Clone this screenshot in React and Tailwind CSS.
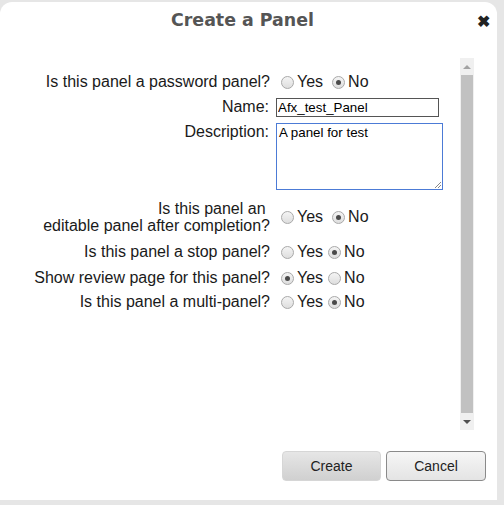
import React from 'react'

const FONT = '"Liberation Sans", Arial, sans-serif'

const Radio = ({ checked, className = '' }) => (
  <span
    className={`inline-flex w-[13px] h-[13px] shrink-0 items-center justify-center rounded-full border border-[#a9a9a9] bg-gradient-to-b from-[#f4f4f4] to-[#dedede] ${className}`}
  >
    {checked && <span className="w-[5px] h-[5px] rounded-full bg-[#4a4a4a]" />}
  </span>
)

const YesNo = ({ value, spaced }) => (
  <div className="flex items-center text-[16px] leading-[20px] text-[#1a1a1a]">
    <Radio checked={value === 'yes'} className="ml-[11px] mr-[3px]" />
    <span>Yes</span>
    <Radio checked={value === 'no'} className={`${spaced ? 'ml-[9px]' : 'ml-[5px]'} mr-[3px]`} />
    <span>No</span>
  </div>
)

export default function App() {
  return (
    <div className="w-[504px] h-[505px] bg-[#e6e6e6] overflow-hidden pt-[2px]" style={{ fontFamily: FONT }}>
      <div className="w-[497px] h-[498px] bg-white rounded-t-[12px] flex flex-col">
        {/* Title bar */}
        <div className="relative h-[36px] flex items-center justify-center pr-[12px]">
          <h1
            className="text-[17.4px] font-bold text-[#555] pt-[1px]"
            style={{ fontFamily: '"DejaVu Sans", Verdana, sans-serif' }}
          >
            Create a Panel
          </h1>
          <span className="absolute right-[7px] top-[12px] text-[#222] text-[16px] font-bold leading-none">
            ✖
          </span>
        </div>

        {/* Body with scrollbar */}
        <div className="flex mt-[20px] h-[372px]">
          <div className="w-[460px] text-[16px] text-[#1a1a1a] pt-[14px]">
            <div className="flex items-center h-[20px]">
              <div className="w-[270px] text-right">Is this panel a password panel?</div>
              <YesNo value="no" spaced />
            </div>

            <div className="flex items-center h-[20px] mt-[5px]">
              <div className="w-[270px] text-right pr-[1px]">Name:</div>
              <input
                readOnly
                value="Afx_test_Panel"
                style={{ fontFamily: FONT }}
                className="ml-[6px] w-[163px] h-[19px] border border-[#555] px-[1px] text-[13.33px] leading-[17px] text-black outline-none"
              />
            </div>

            <div className="flex items-start mt-[6px]">
              <div className="w-[270px] text-right leading-[18px] pr-[1px]">Description:</div>
              <div className="relative ml-[6px]">
                <textarea
                  readOnly
                  value="A panel for test"
                  style={{ fontFamily: FONT }}
                  className="block w-[167px] h-[67px] border border-[#4c7bd6] px-[2px] py-[1px] text-[13.33px] leading-[16px] text-black outline-none resize-none"
                />
                <svg className="absolute right-[2px] bottom-[2px]" width="7" height="7" viewBox="0 0 7 7">
                  <path d="M7 1 L1 7 M7 4 L4 7" stroke="#888" strokeWidth="1" />
                </svg>
              </div>
            </div>

            <div className="flex items-center mt-[10px]">
              <div className="w-[270px] text-right leading-[17px]">
                Is this panel an&nbsp;
                <br />
                editable panel after completion?
              </div>
              <YesNo value="no" spaced />
            </div>

            <div className="flex items-center h-[20px] mt-[8px]">
              <div className="w-[270px] text-right">Is this panel a stop panel?</div>
              <YesNo value="no" />
            </div>

            <div className="flex items-center h-[20px] mt-[6px]">
              <div className="w-[270px] text-right">Show review page for this panel?</div>
              <YesNo value="yes" />
            </div>

            <div className="flex items-center h-[20px] mt-[4px]">
              <div className="w-[270px] text-right">Is this panel a multi-panel?</div>
              <YesNo value="no" />
            </div>
          </div>

          {/* Scrollbar */}
          <div className="w-[14px] bg-[#f0f0f0] flex flex-col items-center">
            <div className="h-[17px] flex items-center justify-center">
              <span className="w-0 h-0 border-l-[4px] border-r-[4px] border-b-[4px] border-l-transparent border-r-transparent border-b-[#a3a3a3]" />
            </div>
            <div className="w-[12px] flex-1 bg-[#c1c1c1]" />
            <div className="h-[17px] flex items-center justify-center">
              <span className="w-0 h-0 border-l-[4px] border-r-[4px] border-t-[4px] border-l-transparent border-r-transparent border-t-[#505050]" />
            </div>
          </div>
        </div>

        {/* Buttons */}
        <div className="flex justify-end gap-[5px] pr-[11px] mt-[21px]">
          <button
            style={{ fontFamily: FONT }}
            className="w-[99px] h-[30px] rounded-[4px] bg-gradient-to-b from-[#e6e6e6] to-[#d0d0d0] border border-[#d6d6d6] text-[14px] text-[#222]"
          >
            Create
          </button>
          <button
            style={{ fontFamily: FONT }}
            className="w-[100px] h-[30px] rounded-[4px] bg-gradient-to-b from-[#f6f6f6] to-[#e4e4e4] border border-[#8a8a8a] text-[14px] text-[#222]"
          >
            Cancel
          </button>
        </div>
      </div>
    </div>
  )
}
